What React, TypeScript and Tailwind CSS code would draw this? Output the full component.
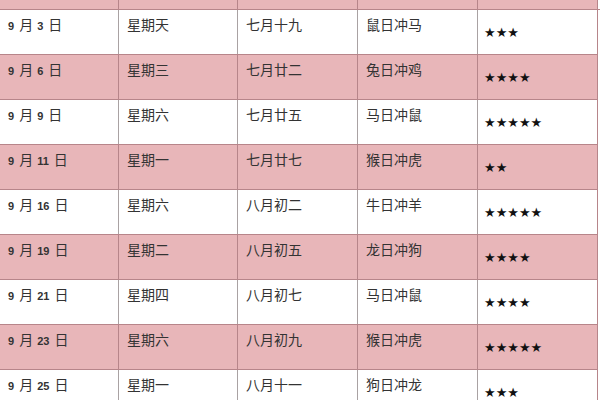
import React from "react";

const rows = [
  ["9", "3", "星期天", "七月十九", "鼠日冲马", 3],
  ["9", "6", "星期三", "七月廿二", "兔日冲鸡", 4],
  ["9", "9", "星期六", "七月廿五", "马日冲鼠", 5],
  ["9", "11", "星期一", "七月廿七", "猴日冲虎", 2],
  ["9", "16", "星期六", "八月初二", "牛日冲羊", 5],
  ["9", "19", "星期二", "八月初五", "龙日冲狗", 4],
  ["9", "21", "星期四", "八月初七", "马日冲鼠", 4],
  ["9", "23", "星期六", "八月初九", "猴日冲虎", 5],
  ["9", "25", "星期一", "八月十一", "狗日冲龙", 3],
] as const;

const cjk = { fontFamily: '"Noto Sans CJK SC", "Noto Sans", sans-serif' };
const num = { fontFamily: '"Liberation Sans", "Noto Sans", sans-serif' };

export default function App() {
  return (
    <div className="w-[600px] h-[400px] overflow-hidden bg-white text-[#333]" style={cjk}>
      <div className="flex h-[10px] border-b border-[#b7858a]">
        <div className="w-[119px] bg-[#e8b6b9] border-r border-[#b7858a]" />
        <div className="w-[119px] bg-[#e8b6b9] border-r border-[#b7858a]" />
        <div className="w-[120px] bg-[#e8b6b9] border-r border-[#b7858a]" />
        <div className="w-[120px] bg-[#e8b6b9] border-r border-[#b7858a]" />
        <div className="w-[120px] bg-[#e8b6b9] border-r border-[#b7858a]" />
      </div>
      {rows.map((r, i) => {
        const pink = i % 2 === 1;
        const bg = pink ? "bg-[#e8b6b9]" : "bg-white";
        const vb = pink ? "border-[#b7858a]" : "border-[#a9a2a3]";
        return (
          <div key={i} className="flex h-[45px]">
            <div className={`flex border-b border-[#b7858a] ${bg}`}>
              <div className={`w-[119px] border-r ${vb} pl-[8px] pt-[3px] text-[14px] leading-[22px] text-[#333]`}>
                <span className="text-[11px] font-bold" style={num}>{r[0]}</span>
                <span className="ml-[5px]">月</span>
                <span className="ml-[4px] text-[11px] font-bold" style={num}>{r[1]}</span>
                <span className="ml-[5px]">日</span>
              </div>
              <div className={`w-[119px] border-r ${vb} pl-[8px] pt-[3px] text-[14px] leading-[22px]`}>{r[2]}</div>
              <div className={`w-[120px] border-r ${vb} pl-[8px] pt-[3px] text-[14px] leading-[22px]`}>{r[3]}</div>
              <div className={`w-[120px] border-r ${vb} pl-[8px] pt-[3px] text-[14px] leading-[22px]`}>{r[4]}</div>
              <div className={`w-[120px] border-r border-[#b7858a] pl-[6px] pt-[15px] text-[13px] leading-[16px] text-[#111]`} style={{ fontFamily: '"DejaVu Sans", sans-serif' }}>
                {"★".repeat(r[5] as number)}
              </div>
            </div>
          </div>
        );
      })}
    </div>
  );
}
